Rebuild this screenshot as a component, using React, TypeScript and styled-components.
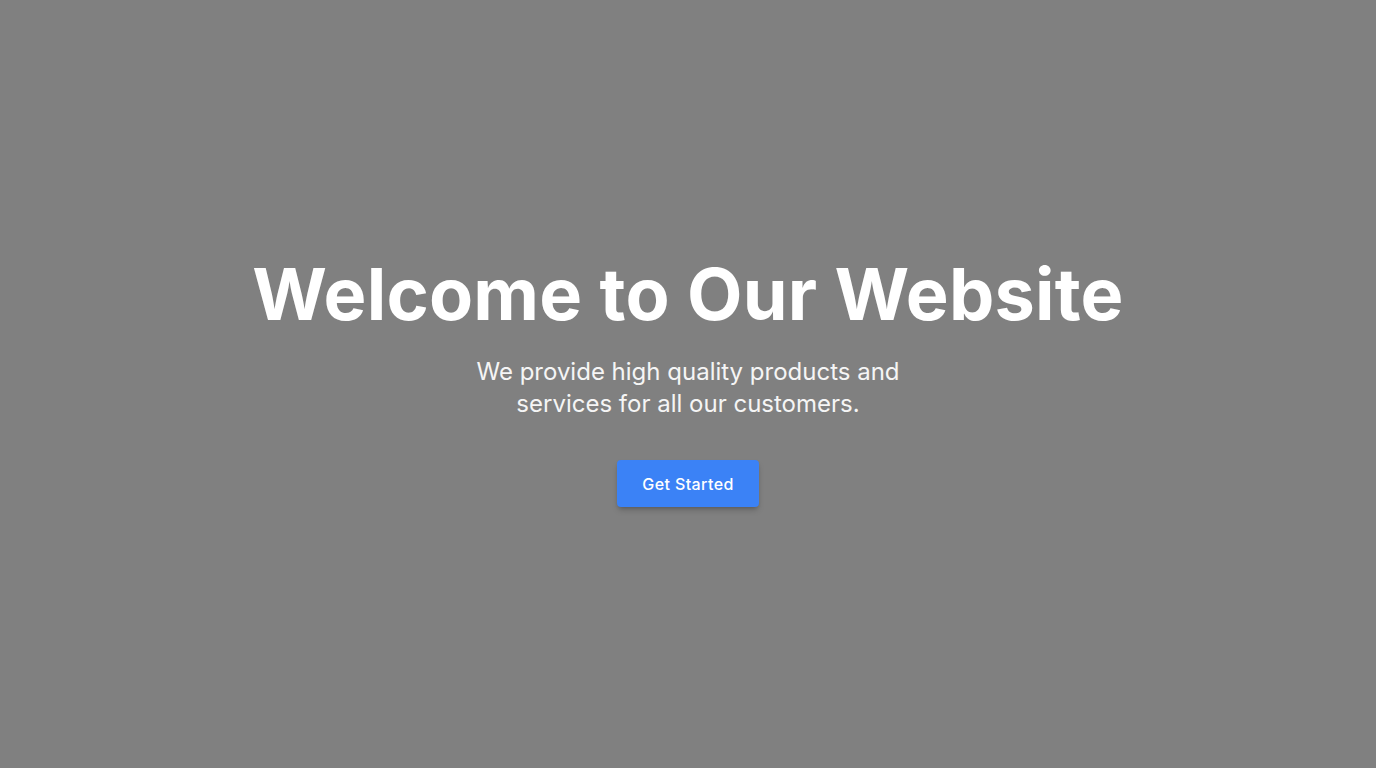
import React from "react";
import styled, { createGlobalStyle } from "styled-components";

const Global = createGlobalStyle`
  html, body { margin: 0; padding: 0; }
  body { font-family: Inter, "Noto Sans", sans-serif; background: #808080; }
`;

const Hero = styled.section`
  box-sizing: border-box;
  min-height: 768px;
  padding-bottom: 3px;
  display: flex;
  flex-direction: column;
  align-items: center;
  justify-content: center;
  text-align: center;
  background: #808080;
`;

const Title = styled.h1`
  margin: 0;
  font-size: 72px;
  line-height: 1;
  font-weight: 700;
  letter-spacing: 0.2px;
  color: #ffffff;
`;

const Subtitle = styled.p`
  margin: 26px 0 0;
  max-width: 448px;
  font-size: 24px;
  line-height: 32px;
  color: #f5f5f5;
`;

const Button = styled.button`
  margin-top: 40px;
  padding: 11.5px 25px;
  border: none;
  border-radius: 4px;
  background: #3b82f6;
  color: #ffffff;
  font-family: Inter, sans-serif;
  font-size: 16px;
  line-height: 24px;
  font-weight: 500;
  letter-spacing: 0.4px;
  box-shadow: 0 4px 6px -1px rgba(0,0,0,0.2), 0 2px 4px -2px rgba(0,0,0,0.2);
  cursor: pointer;
`;

export default function App() {
  return (
    <>
      <Global />
      <Hero>
        <Title>Welcome to Our Website</Title>
        <Subtitle>We provide high quality products and services for all our customers.</Subtitle>
        <Button>Get Started</Button>
      </Hero>
    </>
  );
}
